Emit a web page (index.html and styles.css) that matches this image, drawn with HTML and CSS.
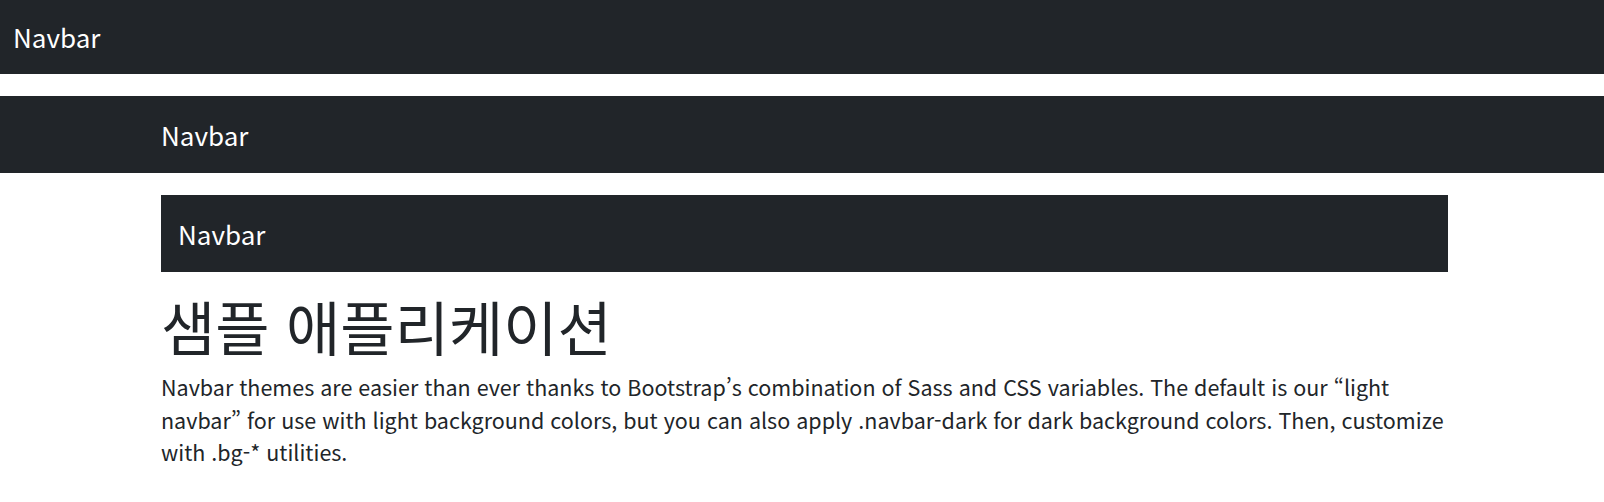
FILE: index.html
```html
<!DOCTYPE html>
<html lang="ko">
<head>
<meta charset="utf-8">
<title>샘플 애플리케이션</title>
<link rel="stylesheet" href="styles.css">
</head>
<body>
<nav class="navbar navbar-top">
  <span class="brand">Navbar</span>
</nav>
<nav class="navbar navbar-mid">
  <div class="container">
    <span class="brand">Navbar</span>
  </div>
</nav>
<div class="container">
  <nav class="navbar navbar-inner">
    <span class="brand">Navbar</span>
  </nav>
  <main class="content">
    <h1 class="title">샘플 애플리케이션</h1>
    <p class="lead-text">Navbar themes are easier than ever thanks to Bootstrap’s combination of Sass and CSS variables. The default is our “light navbar” for use with light background colors, but you can also apply .navbar-dark for dark background colors. Then, customize with .bg-* utilities.</p>
  </main>
</div>
</body>
</html>
```
FILE: styles.css
```css
html, body {
  margin: 0;
  padding: 0;
  background: #ffffff;
}
body {
  font-family: "Noto Sans CJK KR", "Noto Sans", sans-serif;
  color: #212529;
}
.navbar {
  background: #212529;
  display: flex;
  align-items: center;
}
.brand {
  color: #ffffff;
  font-size: 26px;
  line-height: 40px;
  white-space: nowrap;
}
.navbar-top {
  height: 74px;
  padding-left: 13px;
}
.navbar-mid {
  height: 77px;
  margin-top: 22px;
}
.container {
  width: 1287px;
  margin-left: 161px;
}
.navbar-inner {
  height: 77px;
  margin-top: 22px;
  padding-left: 17px;
}
.title {
  margin: 19px 0 0 0;
  font-size: 59px;
  font-weight: 400;
  line-height: 70px;
}
.lead-text {
  margin: 10px 0 0 0;
  font-size: 21.5px;
  line-height: 32.7px;
}
```
